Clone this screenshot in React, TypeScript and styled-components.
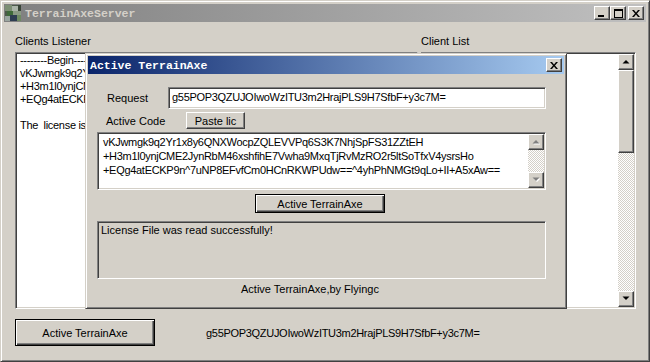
import React from 'react'
import styled, { createGlobalStyle, css } from 'styled-components'

const FACE = '#d4d0c8'
const HASH = 'g55POP3QZUJOIwoWzITU3m2HrajPLS9H7SfbF+y3c7M='
const CODE = [
  'vKJwmgk9q2Yr1x8y6QNXWocpZQLEVVPq6S3K7NhjSpFS31ZZtEH',
  '+H3m1l0ynjCME2JynRbM46xshfihE7Vwha9MxqTjRvMzRO2r5ltSoTfxV4ysrsHo',
  '+EQg4atECKP9n^7uNP8EFvfCm0HCnRKWPUdw==^4yhPhNMGt9qLo+II+A5xAw==',
]
const LISTENER = [
  '--------Begin--------',
  ...CODE,
  '',
  'The  license is written to the file successfully.',
]

const GlobalStyle = createGlobalStyle`
  html, body {
    margin: 0;
    padding: 0;
    background: ${FACE};
  }
  body {
    font-family: "Liberation Sans", Arial, sans-serif;
    font-size: 11px;
    color: #000;
  }
  * {
    box-sizing: border-box;
  }
`

const frame = css`
  border: 1px solid;
  border-color: ${FACE} #404040 #404040 ${FACE};
  box-shadow: inset 1px 1px #fff, inset -1px -1px #808080;
`
const raised = css`
  border: 1px solid;
  border-color: #fff #404040 #404040 #fff;
  box-shadow: inset -1px -1px #808080;
`
const sunken = css`
  border: 1px solid;
  border-color: #808080 #fff #fff #808080;
  box-shadow: inset 1px 1px #404040, inset -1px -1px ${FACE};
`
const codeFont = css`
  letter-spacing: -0.3px;
`

const Window = styled.div`
  width: 650px;
  height: 362px;
  ${frame};
  padding: 3px;
  background: ${FACE};
  display: flex;
  flex-direction: column;
`
const TitleBar = styled.div<{ $active?: boolean }>`
  height: 18px;
  flex: none;
  display: flex;
  align-items: center;
  padding: 0 2px 0 1px;
  background: ${(p) =>
    p.$active
      ? 'linear-gradient(90deg, #0a246a, #a6caf0)'
      : 'linear-gradient(90deg, #808080, #c0c0c0)'};
`
const Caption = styled.span<{ $active?: boolean }>`
  flex: 1;
  font-family: "Liberation Mono", "Courier New", monospace;
  font-weight: bold;
  font-size: 11.5px;
  color: ${(p) => (p.$active ? '#fff' : FACE)};
  white-space: nowrap;
  padding-left: ${(p) => (p.$active ? '1px' : '4px')};
`
const CapButton = styled.div<{ $gap?: boolean }>`
  width: 16px;
  height: 14px;
  ${raised};
  box-shadow: inset -1px -1px #808080, inset 1px 1px ${FACE};
  background: ${FACE};
  display: flex;
  align-items: center;
  justify-content: center;
  margin-left: ${(p) => (p.$gap ? '2px' : '0')};
`

const Client = styled.div`
  flex: 1;
  position: relative;
  display: flex;
  flex-direction: column;
  padding: 12px 10px 0 11px;
`
const Panes = styled.div`
  display: grid;
  grid-template-columns: 403px 215px;
  grid-template-rows: 14px 257px;
  column-gap: 3px;
  row-gap: 4px;
`
const Label = styled.div`
  line-height: 14px;
  white-space: nowrap;
`
const ListBox = styled.div`
  ${sunken};
  background: #fff;
  overflow: hidden;
  padding: 1px 4px;
  line-height: 13px;
  white-space: pre;
  ${codeFont};
`
const ClientList = styled.div`
  ${sunken};
  background: #fff;
  padding: 1px;
  display: flex;
  justify-content: flex-end;
`
const ScrollBar = styled.div`
  width: 16px;
  display: flex;
  flex-direction: column;
  justify-content: space-between;
  background: repeating-conic-gradient(#fff 0 25%, ${FACE} 0 50%) 0 0 / 2px 2px;
`
const ArrowButton = styled.div`
  width: 16px;
  height: 16px;
  ${raised};
  box-shadow: inset -1px -1px #808080, inset 1px 1px ${FACE};
  background: ${FACE};
  display: flex;
  align-items: center;
  justify-content: center;
`
const Thumb = styled.div<{ $h: number }>`
  height: ${(p) => p.$h}px;
  ${raised};
  box-shadow: inset -1px -1px #808080, inset 1px 1px ${FACE};
  background: ${FACE};
`
const Track = styled.div`
  flex: 1;
`

const Footer = styled.div`
  margin-top: 10px;
  height: 27px;
  display: flex;
  align-items: center;
`
const DefaultButton = styled.div<{ $w: number; $h: number }>`
  width: ${(p) => p.$w}px;
  height: ${(p) => p.$h}px;
  border: 1px solid #000;
  box-shadow: inset 1px 1px #fff, inset -1px -1px #404040, inset -2px -2px #808080;
  background: ${FACE};
  display: flex;
  align-items: center;
  justify-content: center;
  white-space: nowrap;
`
const HashText = styled.span`
  margin-left: 51px;
  white-space: nowrap;
  ${codeFont};
`

const Dialog = styled.div`
  position: absolute;
  left: 81px;
  top: 31px;
  width: 482px;
  height: 256px;
  ${frame};
  padding: 2px;
  background: ${FACE};
  display: flex;
  flex-direction: column;
`
const DialogBody = styled.div`
  flex: 1;
  display: flex;
  flex-direction: column;
  padding: 13px 18px 0 9px;
`
const Row = styled.div<{ $h: number; $top?: number }>`
  height: ${(p) => p.$h}px;
  margin-top: ${(p) => p.$top || 0}px;
  display: flex;
  align-items: center;
`
const FieldLabel = styled.span<{ $w: number; $pad: number }>`
  width: ${(p) => p.$w}px;
  padding-left: ${(p) => p.$pad}px;
  flex: none;
  white-space: nowrap;
`
const Input = styled.div`
  flex: 1;
  height: 22px;
  ${sunken};
  background: #fff;
  padding-left: 3px;
  line-height: 18px;
  white-space: nowrap;
  overflow: hidden;
  ${codeFont};
`
const SmallButton = styled.div`
  width: 59px;
  height: 17px;
  ${raised};
  background: ${FACE};
  display: flex;
  align-items: center;
  justify-content: center;
`
const CodeArea = styled.div`
  margin-top: 3px;
  height: 58px;
  ${sunken};
  background: #fff;
  padding: 1px;
  display: flex;
`
const CodeText = styled.div`
  flex: 1;
  padding: 1px 4px;
  line-height: 14px;
  white-space: pre;
  overflow: hidden;
  ${codeFont};
`
const ActiveButton = styled(DefaultButton)`
  margin-top: 4px;
  margin-left: 158px;
`
const StatusBox = styled.div`
  margin-top: 8px;
  height: 58px;
  ${sunken};
  background: ${FACE};
  padding: 1px 3px;
  line-height: 14px;
`
const Credit = styled.div`
  margin-top: 3px;
  line-height: 14px;
  padding-left: 144px;
  white-space: nowrap;
`

function Arrow({ up, disabled }: { up?: boolean; disabled?: boolean }) {
  const pts = up ? '0,4 7,4 3.5,0.5' : '0,0 7,0 3.5,3.5'
  return (
    <svg width="8" height="6" viewBox="-0.5 -0.5 8 6">
      {disabled && <polygon points={pts} fill="#fff" transform="translate(1 1)" />}
      <polygon points={pts} fill={disabled ? '#808080' : '#000'} />
    </svg>
  )
}

function AppIcon() {
  return (
    <svg width="16" height="16" viewBox="0 0 16 16">
      <rect width="16" height="16" fill="#4c5a4a" />
      <rect x="0" y="0" width="7" height="6" fill="#7c8f74" />
      <rect x="7" y="1" width="6" height="5" fill="#aab4a8" />
      <rect x="2" y="6" width="6" height="5" fill="#3f6a3a" />
      <rect x="8" y="6" width="8" height="4" fill="#8a9a84" />
      <rect x="0" y="11" width="5" height="5" fill="#9aa6a0" />
      <rect x="5" y="10" width="7" height="6" fill="#2e3d52" />
      <rect x="12" y="10" width="4" height="6" fill="#6e8a62" />
      <rect x="13" y="0" width="3" height="6" fill="#3a4638" />
    </svg>
  )
}

function CloseButton({ gap }: { gap?: boolean }) {
  return (
    <CapButton $gap={gap}>
      <svg width="8" height="7" viewBox="0 0 8 7">
        <path d="M0 0h2l2 2.5L6 0h2L5 3.5 8 7H6L4 4.5 2 7H0l3-3.5z" fill="#000" />
      </svg>
    </CapButton>
  )
}

function CaptionButtons() {
  return (
    <>
      <CapButton>
        <svg width="8" height="7" viewBox="0 0 8 7">
          <rect x="0" y="5" width="6" height="2" fill="#000" />
        </svg>
      </CapButton>
      <CapButton>
        <svg width="9" height="9" viewBox="0 0 9 9">
          <rect x="0.5" y="0.5" width="8" height="8" fill="none" stroke="#000" />
          <rect x="0" y="1" width="9" height="1" fill="#000" />
        </svg>
      </CapButton>
      <CloseButton gap />
    </>
  )
}

export default function App() {
  return (
    <>
      <GlobalStyle />
      <Window>
        <TitleBar>
          <AppIcon />
          <Caption>TerrainAxeServer</Caption>
          <CaptionButtons />
        </TitleBar>
        <Client>
          <Panes>
            <Label>Clients Listener</Label>
            <Label>Client List</Label>
            <ListBox>{LISTENER.join('\n')}</ListBox>
            <ClientList>
              <ScrollBar>
                <ArrowButton>
                  <Arrow up />
                </ArrowButton>
                <Thumb $h={83} />
                <Track />
                <ArrowButton>
                  <Arrow />
                </ArrowButton>
              </ScrollBar>
            </ClientList>
          </Panes>
          <Footer>
            <DefaultButton $w={140} $h={27}>Active TerrainAxe</DefaultButton>
            <HashText>{HASH}</HashText>
          </Footer>

          <Dialog>
            <TitleBar $active>
              <Caption $active>Active TerrainAxe</Caption>
              <CloseButton />
            </TitleBar>
            <DialogBody>
              <Row $h={22}>
                <FieldLabel $w={71} $pad={10}>Request</FieldLabel>
                <Input>{HASH}</Input>
              </Row>
              <Row $h={17} $top={3}>
                <FieldLabel $w={89} $pad={9}>Active Code</FieldLabel>
                <SmallButton>Paste lic</SmallButton>
              </Row>
              <CodeArea>
                <CodeText>{CODE.join('\n')}</CodeText>
                <ScrollBar>
                  <ArrowButton>
                    <Arrow up disabled />
                  </ArrowButton>
                  <ArrowButton>
                    <Arrow disabled />
                  </ArrowButton>
                </ScrollBar>
              </CodeArea>
              <ActiveButton $w={130} $h={19}>Active TerrainAxe</ActiveButton>
              <StatusBox>License File was read successfully!</StatusBox>
              <Credit>Active TerrainAxe,by Flyingc</Credit>
            </DialogBody>
          </Dialog>
        </Client>
      </Window>
    </>
  )
}
